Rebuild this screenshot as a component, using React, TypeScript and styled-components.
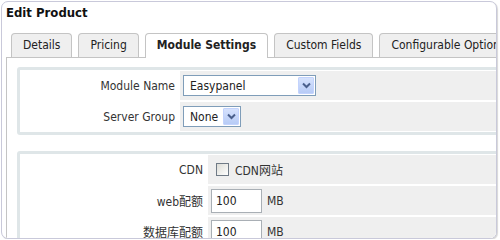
import { createGlobalStyle, styled } from "styled-components";
import { FC, ReactNode } from "react";

const GlobalStyle = createGlobalStyle`
  html, body {
    margin: 0;
    padding: 0;
    background: #ffffff;
  }
  body {
    font-family: "DejaVu Sans Condensed", "Liberation Sans", "Noto Sans CJK SC", sans-serif;
    font-size: 12px;
    color: #222;
  }
`;

const tabs = ["Details", "Pricing", "Module Settings", "Custom Fields", "Configurable Options"];

const DropArrow: FC = () => (
  <ArrowButton>
    <svg width="9" height="7" viewBox="0 0 9 7">
      <path d="M1 1.5 L4.5 5 L8 1.5" fill="none" stroke="#4a5f8c" strokeWidth="2" />
    </svg>
  </ArrowButton>
);

interface SelectProps {
  value: string;
  width: number;
}

const Select: FC<SelectProps> = ({ value, width }) => (
  <SelectBox $width={width}>
    <SelectText>{value}</SelectText>
    <DropArrow />
  </SelectBox>
);

interface RowProps {
  label: string;
  children: ReactNode;
}

const Row: FC<RowProps> = ({ label, children }) => (
  <>
    <FieldLabel>{label}</FieldLabel>
    <FieldValue>{children}</FieldValue>
  </>
);

const App: FC = () => {
  return (
    <>
      <GlobalStyle />
      <Frame>
        <Title>Edit Product</Title>
        <TabBar>
          {tabs.map((t) => (
            <Tab key={t} $active={t === "Module Settings"}>
              {t}
            </Tab>
          ))}
        </TabBar>
        <Panel>
          <FieldBox $labelWidth={157}>
            <Row label="Module Name">
              <Select value="Easypanel" width={133} />
            </Row>
            <Row label="Server Group">
              <Select value="None" width={58} />
            </Row>
          </FieldBox>
          <FieldBox $labelWidth={185}>
            <Row label="CDN">
              <CheckBox />
              <Inline>CDN网站</Inline>
            </Row>
            <Row label="web配额">
              <TextInput defaultValue="100" />
              <Inline>MB</Inline>
            </Row>
            <Row label="数据库配额">
              <TextInput defaultValue="100" />
              <Inline>MB</Inline>
            </Row>
          </FieldBox>
        </Panel>
      </Frame>
    </>
  );
};
export default App;

const Frame = styled.div`
  margin: 1px 0 0 1px;
  width: 494px;
  height: 236px;
  border: 1px solid #c9c9da;
  border-radius: 7px;
  box-shadow: 1px 1px 1px #d8d8d8;
  overflow: hidden;
  background: #fff;
`;

const Title = styled.h1`
  margin: 0;
  padding: 3px 0 0 4px;
  font-size: 13px;
  line-height: 16px;
  font-weight: bold;
  color: #111;
`;

const TabBar = styled.div`
  display: flex;
  margin: 12px 0 0 4px;
  padding-left: 5px;
  white-space: nowrap;
`;

const Tab = styled.div<{ $active?: boolean }>`
  flex: none;
  height: ${(p) => (p.$active ? "24px" : "23px")};
  line-height: 23px;
  margin-right: 6px;
  margin-bottom: ${(p) => (p.$active ? "-1px" : "0")};
  padding: 0 11px;
  border: 1px solid #c4c4c4;
  border-bottom: none;
  border-radius: 4px 4px 0 0;
  background: ${(p) => (p.$active ? "#ffffff" : "#efefef")};
  font-weight: ${(p) => (p.$active ? "bold" : "normal")};
  color: #222;
  position: relative;
  z-index: 1;
`;

const Panel = styled.div`
  margin-left: 4px;
  width: 800px;
  height: 300px;
  border: 1px solid #c4c4c4;
  border-right: none;
  background: #fff;
  padding: 9px 0 0 10px;
`;

const FieldBox = styled.div<{ $labelWidth: number }>`
  display: grid;
  grid-template-columns: ${(p) => p.$labelWidth}px 1fr;
  grid-auto-rows: 29px;
  gap: 2px;
  width: 600px;
  padding: 1px;
  margin-bottom: 16px;
  border: 3px solid #dfe6e8;
  border-radius: 3px;
  background: #fff;
`;

const FieldLabel = styled.div`
  display: flex;
  align-items: center;
  justify-content: flex-end;
  padding-right: 3px;
  color: #333;
  white-space: nowrap;
`;

const FieldValue = styled.div`
  display: flex;
  align-items: center;
  gap: 5px;
  padding-left: 3px;
  background: #efefef;
`;

const SelectBox = styled.div<{ $width: number }>`
  box-sizing: border-box;
  width: ${(p) => p.$width}px;
  height: 21px;
  display: flex;
  align-items: center;
  justify-content: space-between;
  border: 1px solid #7f9db9;
  background: #fff;
  padding: 1px 1px 1px 6px;
`;

const SelectText = styled.span`
  color: #222;
`;

const ArrowButton = styled.span`
  width: 16px;
  height: 17px;
  display: flex;
  align-items: center;
  justify-content: center;
  background: linear-gradient(#d6e2fd, #b7cbf6);
  border: 1px solid #c3d3fd;
  box-sizing: border-box;
  border-radius: 1px;
`;

const CheckBox = styled.span`
  box-sizing: border-box;
  width: 13px;
  height: 13px;
  margin-left: 5px;
  margin-right: 1px;
  border: 1px solid #6f7a86;
  background: linear-gradient(135deg, #dcdcd6, #ffffff);
`;

const TextInput = styled.input`
  box-sizing: border-box;
  width: 51px;
  height: 24px;
  padding: 0 0 0 4px;
  border: 1px solid #a9afb5;
  font-family: inherit;
  font-size: 12px;
  color: #222;
  outline: none;
`;

const Inline = styled.span`
  color: #333;
`;
